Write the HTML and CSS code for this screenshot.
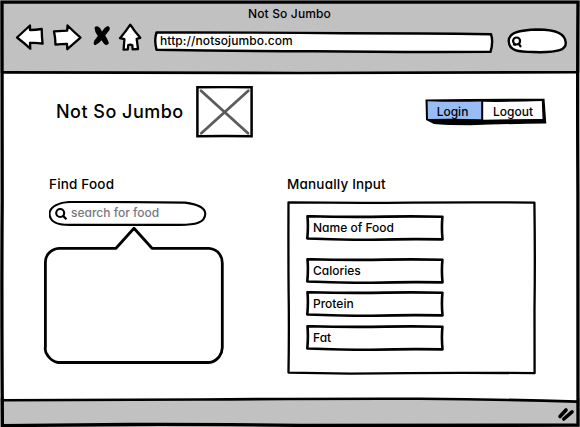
FILE: index.html
```html
<!DOCTYPE html>
<html lang="en">
<head>
<meta charset="utf-8">
<title>Not So Jumbo</title>
<link rel="stylesheet" href="styles.css">
</head>
<body>
<svg class="defs" width="0" height="0">
  <symbol id="field" viewBox="0 0 138 26">
    <path fill="#fff" stroke="#000" stroke-width="2.6" stroke-linejoin="round" d="M1.5 1.2Q40 2.2 80 1.6 110 1 136.4 1.8Q135.4 13 136.5 24.4 105 23.6 65 24.8 35 24.8 1.3 23.5Q2.4 12 1.5 1.2Z"/>
  </symbol>
</svg>
<div class="window">
  <header class="chrome">
    <div class="title">Not So Jumbo</div>
    <div class="toolbar">
      <svg class="nav" width="132" height="32" viewBox="14 21 132 32">
        <g fill="#fff" stroke="#000" stroke-width="2.3" stroke-linejoin="round">
          <path d="M17 37.5L30 25.5V30Q36 30 41.7 29Q41.8 37 42.6 43.6Q36 42.6 30 43L30.3 48.7Q23 42 17 37.5Z"/>
          <path d="M54 31.3Q61 31 67.2 30.7L67.5 25.5Q74 32 80.5 37.6L67.3 49.2 67 43.8Q61 44 55.5 44.7Q55.4 38 54 31.3Z"/>
          <path d="M130.3 24.6Q135 32 140.3 37.8L136.7 38.8 138 49 132.7 49.3 132.3 45.3Q130 44 128.2 45.3L127.8 49.3 123.6 49.6 124.4 39.2 120 38.2Q126 31 130.3 24.6Z"/>
        </g>
        <path fill="#000" d="M94.5 27.5Q97 25 100 28L102 31.5Q104 27.5 107.5 26Q110.5 26.5 109.5 30L105.2 35.5Q107.5 39 109 43Q107 46.5 104 43.8L101.5 40.3Q99 43.5 95.2 45.3Q92.8 44.5 94.2 40.8L97.8 36Q94.5 31.5 94.5 27.5Z"/>
      </svg>
      <div class="address">
        <svg class="outline" viewBox="0 0 340 24"><path fill="#fff" stroke="#000" stroke-width="2.4" stroke-linejoin="round" d="M2.5 2.5Q90 2.3 190 3.2Q270 3.2 337 4.2 339.5 12 336.5 21.9Q240 22.3 160 21.3 80 21.2 2.5 19.8Q0 10 2.5 2.5Z"/></svg>
        <span>http://notsojumbo.com</span>
      </div>
      <svg class="find" width="60" height="26" viewBox="507 28 60 26">
        <path fill="#fff" stroke="#000" stroke-width="2.4" d="M508.7 41C509 33 518 30 538 29.5C557 29.5 565.5 34 565.8 43C565.8 50 558 52 540 52.2C523 51.5 509 53 508.7 41Z"/>
        <circle cx="516.6" cy="41" r="3.5" fill="none" stroke="#000" stroke-width="2.2"/><path d="M513 44.2l3 .8M518.5 43.5l2.5 3.5" stroke="#000" stroke-width="2.2"/>
      </svg>
    </div>
  </header>

  <main>
    <div class="banner">
      <h1>Not So Jumbo</h1>
      <svg class="picture" width="58" height="52" viewBox="196 86 58 52">
        <path fill="#fff" stroke="#000" stroke-width="2.5" d="M197.4 87.3Q225 86.9 251.6 87.3V136.2Q225 135.7 197.4 136.2Z"/>
        <path d="M201 90.7L248 133.3M248.3 90.7L201.3 133.3" stroke="#5c5c5c" stroke-width="2.8" stroke-linecap="round"/>
      </svg>
      <div class="account">
        <svg class="outline" viewBox="425 97 122 29">
          <path d="M425.5 99.5Q485 98.5 544.5 98.8L546.3 123.5Q505 124 470 125.2Q445 125.2 434 124L426 120Z"/>
          <path fill="#97bdf4" d="M427.6 101.3Q455 102.3 481.2 101.5V119.3Q455 118.5 428 119Z"/>
          <path fill="#fff" d="M483.2 101.8Q512 102.2 541.8 100.9L542.5 119Q512 118.9 483.2 119.8Z"/>
        </svg>
        <span class="login">Login</span><span class="logout">Logout</span>
      </div>
    </div>

    <div class="columns">
      <section class="finder">
        <h2>Find Food</h2>
        <div class="search">
          <svg class="outline" viewBox="49 201 158 26">
            <path fill="#fff" stroke="#000" stroke-width="2.1" d="M49.5 214C49.7 206 60 202.3 70 202Q130 201.8 185 202.6Q205 205 205.3 213.7C205 223 195 224.8 180 224.9H70C55 225 50 221 49.5 214Z"/>
            <circle cx="60.2" cy="213" r="4" fill="none" stroke="#000" stroke-width="2.1"/><path d="M62.8 215.6l3.6 3.6" stroke="#000" stroke-width="2.3"/>
          </svg>
          <span>search for food</span>
        </div>
        <svg class="bubble" width="182" height="138" viewBox="43 226 182 138">
          <path fill="#fff" stroke="#000" stroke-width="2.8" stroke-linejoin="round" d="M59 248.3H116L134 228.3 152 248.3H209Q216 249 219.5 254 222.5 258 222.3 264V347Q222.5 352 219 357 214 362.5 209 362.5H58Q52 361.5 48 356 44.5 352 45.4 347V264Q45 257 49 253 53 248.6 59 248.3Z"/>
        </svg>
      </section>
      <section class="manual">
        <h2>Manually Input</h2>
        <div class="panel">
          <svg class="outline" viewBox="287 201 249 174"><path fill="#fff" stroke="#000" stroke-width="2.3" stroke-linejoin="round" d="M288.5 202.4Q350 203.2 410 202.7 470 202 534.4 202.6 535.2 260 534.5 310L534.6 373.2Q450 372.3 350 373.6L288.5 372.6Q289.2 330 288.6 290 288.3 250 288.5 202.4Z"/></svg>
          <div class="field name"><svg class="outline"><use href="#field"/></svg><span>Name of Food</span></div>
          <div class="field calories"><svg class="outline"><use href="#field"/></svg><span>Calories</span></div>
          <div class="field protein"><svg class="outline"><use href="#field"/></svg><span>Protein</span></div>
          <div class="field fat"><svg class="outline"><use href="#field"/></svg><span>Fat</span></div>
        </div>
      </section>
    </div>
  </main>

  <footer>
    <svg width="18" height="15" viewBox="557 407 18 15"><path d="M560 416.5L566 410M563.8 419L572 411.8" stroke="#000" stroke-width="3.6" stroke-linecap="round"/></svg>
  </footer>

  <svg class="frame" viewBox="0 0 580 427">
    <path fill="#fff" d="M3 396H577V401Q500 399 420 398.7 300 398.5 200 399.5L3 400Z"/>
    <g fill="none" stroke="#000" stroke-width="2.6">
      <path d="M2 2.2H578Q577.4 80 577.9 190T578 425.2Q400 424.8 300 425.4 200 424.2 130 424.5L2.4 425.6Q1.5 300 2.2 200 2.5 100 2 2.2Z" stroke-width="3.3"/>
      <path d="M3 72.4Q150 72.2 300 73 450 73 577 72.2"/>
      <path d="M3 400.3L200 399.5Q320 398.6 420 398.8 500 399.3 577 401.6"/>
    </g>
  </svg>
</div>
</body>
</html>
```
FILE: styles.css
```css
* { box-sizing: border-box; }
body { margin: 0; background: #fff; }
.defs { position: absolute; }
svg { display: block; flex: none; }
.window {
  position: relative;
  width: 580px;
  height: 427px;
  display: flex;
  flex-direction: column;
  overflow: hidden;
  color: #000;
  font: 450 12px/16px Inter, "Noto Sans", sans-serif;
  font-feature-settings: "cv11" 1, "ss03" 1;
  white-space: nowrap;
}
.frame { position: absolute; inset: 0; width: 100%; height: 100%; pointer-events: none; }
.outline { position: absolute; inset: 0; width: 100%; height: 100%; }
span { position: relative; }

.chrome { height: 73px; background: #c1c1c1; padding-top: 6px; }
.title { height: 15px; text-align: center; letter-spacing: .15px; padding-right: 1px; }
.toolbar { display: flex; padding-left: 14px; }
.address { position: relative; width: 340px; height: 24px; margin: 9px 0 0 8px; padding: 3px 0 0 6px; letter-spacing: .08px; }
.find { margin: 7px 0 0 13px; }

main { flex: 1; }
.banner { display: flex; align-items: flex-start; padding: 13px 0 0 56px; height: 101px; }
h1 { width: 140px; margin: 14px 0 0; font-size: 18px; line-height: 24px; font-weight: 450; letter-spacing: .48px; }
.account { position: relative; display: flex; width: 122px; height: 29px; margin: 11px 0 0 171px; padding-top: 7px; }
.login { width: 55px; text-align: center; }
.logout { width: 66px; text-align: center; }

.columns { display: flex; }
h2 { margin: 0; font-size: 13.5px; line-height: 20px; font-weight: 450; letter-spacing: .18px; }
.finder { width: 244px; padding-left: 43px; }
.finder h2 { padding-left: 6px; }
.search { position: relative; width: 158px; height: 26px; margin: 7px 0 0 6px; padding: 4px 0 0 22px; color: #777780; letter-spacing: 0; }
.bubble { margin-top: -1px; }
.manual { margin-left: 43px; }
.panel { position: relative; width: 249px; height: 174px; margin-top: 7px; padding: 14px 0 0 19px; }
.field { position: relative; width: 138px; height: 26px; padding: 5px 0 0 7px; }
.calories { margin-top: 17px; }
.protein { margin-top: 7px; }
.fat { margin-top: 8px; }

footer { display: flex; justify-content: flex-end; height: 29px; padding: 9px 5px 0 0; background: #c1c1c1; }
```
